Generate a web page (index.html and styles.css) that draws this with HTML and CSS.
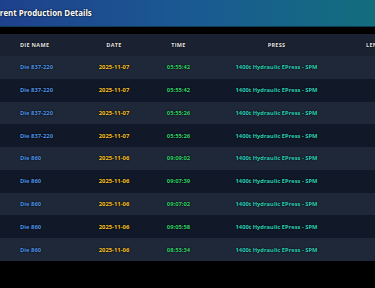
FILE: index.html
```html
<!DOCTYPE html>
<html lang="en">
<head>
<meta charset="utf-8">
<title>Current Production Details</title>
<link rel="stylesheet" href="styles.css">
</head>
<body>
<div class="page">
  <header class="panel-head">
    <h2 class="title">Current Production Details</h2>
    <span class="badge">Real-time</span>
  </header>
  <div class="gap"></div>
  <table class="grid">
    <colgroup>
      <col class="c-die"><col class="c-date"><col class="c-time"><col class="c-press"><col class="c-len">
    </colgroup>
    <thead>
      <tr><th class="l">Die Name</th><th>Date</th><th>Time</th><th>Press</th><th class="len">Length</th></tr>
    </thead>
    <tbody>
      <tr><td class="die">Die 837-220</td><td class="date">2025-11-07</td><td class="time">05:55:42</td><td class="press">1400t Hydraulic EPress - SPM</td><td></td></tr>
      <tr><td class="die">Die 837-220</td><td class="date">2025-11-07</td><td class="time">05:55:42</td><td class="press">1400t Hydraulic EPress - SPM</td><td></td></tr>
      <tr><td class="die">Die 837-220</td><td class="date">2025-11-07</td><td class="time">05:55:26</td><td class="press">1400t Hydraulic EPress - SPM</td><td></td></tr>
      <tr><td class="die">Die 837-220</td><td class="date">2025-11-07</td><td class="time">05:55:26</td><td class="press">1400t Hydraulic EPress - SPM</td><td></td></tr>
      <tr><td class="die">Die 860</td><td class="date">2025-11-06</td><td class="time">09:09:02</td><td class="press">1400t Hydraulic EPress - SPM</td><td></td></tr>
      <tr><td class="die">Die 860</td><td class="date">2025-11-06</td><td class="time">09:07:39</td><td class="press">1400t Hydraulic EPress - SPM</td><td></td></tr>
      <tr><td class="die">Die 860</td><td class="date">2025-11-06</td><td class="time">09:07:02</td><td class="press">1400t Hydraulic EPress - SPM</td><td></td></tr>
      <tr><td class="die">Die 860</td><td class="date">2025-11-06</td><td class="time">09:05:58</td><td class="press">1400t Hydraulic EPress - SPM</td><td></td></tr>
      <tr><td class="die">Die 860</td><td class="date">2025-11-06</td><td class="time">08:53:34</td><td class="press">1400t Hydraulic EPress - SPM</td><td></td></tr>
    </tbody>
  </table>
</div>
</body>
</html>
```
FILE: styles.css
```css
html, body {
  margin: 0;
  padding: 0;
  background: #000;
  overflow: hidden;
}
body {
  font-family: "Open Sans", "Noto Sans", sans-serif;
  font-stretch: 88%;
  width: 375px;
  height: 288px;
}
.page {
  width: 375px;
  overflow: hidden;
}
.panel-head {
  height: 26px;
  width: 460px;
  margin-left: -14px;
  display: flex;
  align-items: center;
  background: linear-gradient(90deg, #1f3f8c 0%, #1a5a93 45%, #0f7574 100%);
  border-bottom: 1px solid #123c55;
}
.title {
  margin: 0;
  padding-left: 0;
  font-size: 7.9px;
  font-weight: 700;
  color: #fff;
  text-shadow: 0 0 2px rgba(0,0,0,0.8), 0 0 1px rgba(0,0,0,0.6);
  white-space: nowrap;
}
.badge {
  margin-left: 290px;
  margin-top: 5px;
  font-size: 6.4px;
  font-weight: 700;
  color: #4ade80;
  text-shadow: 0 0 2px rgba(0,0,0,0.6);
  white-space: nowrap;
}
.gap {
  height: 7px;
  background: #000;
}
.grid {
  width: 460px;
  table-layout: fixed;
  border-collapse: collapse;
}
.c-die { width: 80px; }
.c-date { width: 68px; }
.c-time { width: 61px; }
.c-press { width: 135px; }
.c-len { width: 116px; }
.grid th {
  height: 22px;
  padding: 0;
  background: #1a2130;
  color: #e5e7eb;
  font-size: 5.5px;
  font-weight: 700;
  letter-spacing: 0.3px;
  text-transform: uppercase;
  text-align: center;
  text-shadow: 0 0 1.5px #000, 0 0 1px #000;
  white-space: nowrap;
}
.grid th.l { text-align: left; padding-left: 20px; }
.grid th.len { text-align: left; padding-left: 22px; }
.grid td {
  height: 22.78px;
  padding: 0;
  font-size: 5.85px;
  font-weight: 700;
  text-align: center;
  white-space: nowrap;
  text-shadow: 0 0 1.5px #000, 0 0 1px #000;
}
.grid td.press { font-size: 5.75px; }
.grid tbody tr:nth-child(odd) td { background: #1f2838; }
.grid tbody tr:nth-child(even) td { background: #111827; }
.grid td.die { text-align: left; padding-left: 20px; color: #4f97ea; }
.grid td.date { color: #fac52a; }
.grid td.time { color: #34d36e; }
.grid td.press { color: #2dd4bf; }
```
